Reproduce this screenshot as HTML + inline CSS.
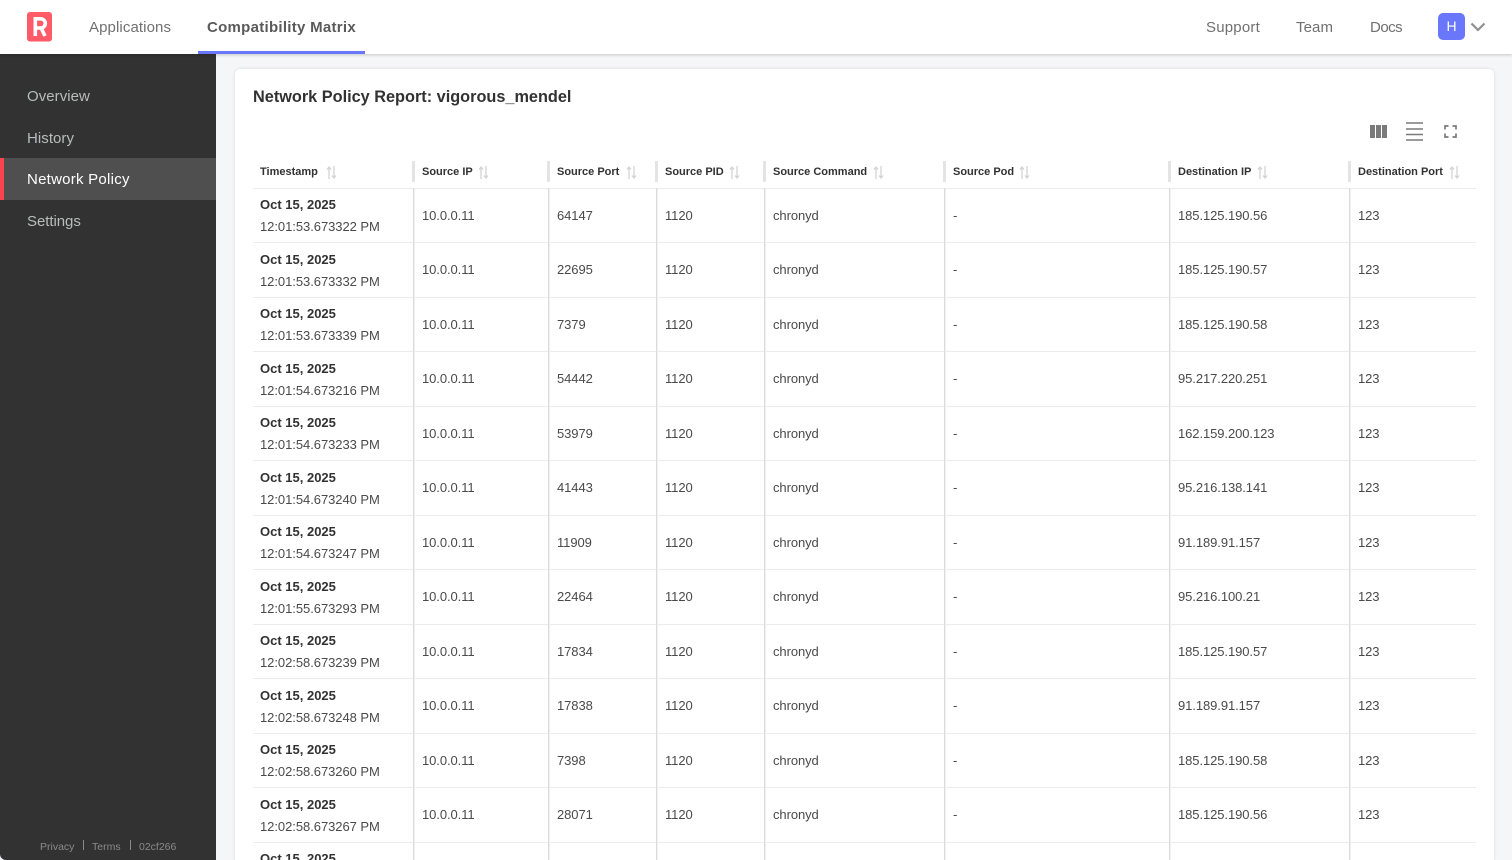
<!DOCTYPE html>
<html lang="en"><head><meta charset="utf-8"><title>Network Policy</title>
<style>
*{box-sizing:border-box}
html,body{margin:0;padding:0;width:1512px;height:860px;overflow:hidden;background:#f5f6f8;font-family:"Liberation Sans",sans-serif;color:#323232}
#wrap{position:relative;width:1512px;height:860px;overflow:hidden}
.a{position:absolute;white-space:nowrap}
#top{position:absolute;left:0;top:0;width:1512px;height:54px;background:#fff;box-shadow:0 1px 3px rgba(0,0,0,.2);z-index:3}
.nav{position:absolute;top:18px;font-size:15px;line-height:20px;color:#707070;white-space:nowrap;letter-spacing:.1px}
#side{position:absolute;left:0;top:54px;width:216px;height:806px;background:#323232;border-bottom-left-radius:6px;z-index:2}
.si{position:absolute;left:27px;font-size:15px;line-height:20px;color:#b8bcbc;letter-spacing:.05px;white-space:nowrap}
.ft{position:absolute;top:786px;font-size:10.5px;line-height:14px;color:#8a8a8a;white-space:nowrap}
#card{position:absolute;left:235px;top:69px;width:1259px;height:791px;background:#fff;border-radius:5px 5px 0 0;box-shadow:0 0 3px rgba(0,0,0,.12);overflow:hidden}
.h{position:absolute;top:96px;font-size:11px;line-height:14px;font-weight:bold;color:#323232;white-space:nowrap}
.s{position:absolute;top:97px;width:11px;height:13px}
.d{position:absolute;top:92px;width:2.500px;height:21px;background:#e4e4e4}
.v{position:absolute;top:119px;height:672px;width:2px;background:#f0f0f0;border-left:1px solid #dcdcdc}
.r{position:absolute;left:18px;width:1223px;height:54.5px;border-top:1px solid #ececec;overflow:hidden}
.r span{position:absolute;top:19px;font-size:13px;line-height:16px;color:#4a4a4a;white-space:nowrap;letter-spacing:-.08px}
.r b{position:absolute;left:7px;top:8.2px;font-size:13px;line-height:16px;color:#323232;white-space:nowrap}
.r i{position:absolute;left:7px;top:30.2px;font-style:normal;font-size:13px;line-height:16px;color:#4a4a4a;white-space:nowrap;letter-spacing:-.05px}
.c2{left:169px}.c3{left:304px}.c4{left:412px}.c5{left:520px}.c6{left:700px}.c7{left:925px}.c8{left:1105px}
</style></head><body><div id="wrap">
<div id="top">
<svg class="a" style="left:27px;top:12px" width="26" height="30" viewBox="0 0 26 30"><rect width="25" height="29.500" rx="3" fill="#ff5a68"/><path d="M8.300 24V6.800h5a4.600 4.600 0 0 1 .8 9.200L18 24M8.300 16h5.500" fill="none" stroke="#fff" stroke-width="3.600"/></svg>
<div class="nav" style="left:89px">Applications</div>
<div class="nav" style="left:207px;font-weight:bold;color:#5a5a5a;letter-spacing:.28px">Compatibility Matrix</div>
<div class="a" style="left:198px;top:51px;width:167px;height:3px;background:#6a77fb"></div>
<div class="nav" style="left:1206px;letter-spacing:.2px">Support</div>
<div class="nav" style="left:1296px">Team</div>
<div class="nav" style="left:1370px;letter-spacing:-.5px">Docs</div>
<div class="a" style="left:1438px;top:13px;width:27px;height:27px;background:#6a77fb;border-radius:5px;color:#fff;font-size:14px;line-height:27px;text-align:center">H</div>
<svg class="a" style="left:1470px;top:22px" width="16" height="10" viewBox="0 0 16 10"><path d="M1.500 1.500L8 8l6.500-6.500" fill="none" stroke="#8f8f8f" stroke-width="2.200"/></svg>
</div>
<div id="side">
<div class="si" style="top:33px">Overview</div>
<div class="si" style="top:75px">History</div>
<div class="a" style="left:0;top:104px;width:216px;height:42px;background:#4f4f4f;border-left:4.500px solid #f7444f"></div>
<div class="si" style="top:116px;color:#fff;letter-spacing:.25px">Network Policy</div>
<div class="si" style="top:158px;letter-spacing:-.05px">Settings</div>
<div class="ft" style="left:40px">Privacy</div>
<div class="a" style="left:83px;top:786px;width:1px;height:10px;background:#8a8a8a"></div>
<div class="ft" style="left:92px">Terms</div>
<div class="a" style="left:130px;top:786px;width:1px;height:10px;background:#8a8a8a"></div>
<div class="ft" style="left:139px">02cf266</div>
</div>
<div id="card">
<div class="a" style="left:18px;top:18px;font-size:16.3px;line-height:20px;font-weight:bold;color:#323232">Network Policy Report: vigorous_mendel</div>
<svg class="a" style="left:1135px;top:56px" width="17" height="13" viewBox="0 0 17 13"><path d="M0 0h5v13H0zM6 0h5v13H6zM12 0h5v13h-5z" fill="#7a7a7a"/></svg>
<svg class="a" style="left:1171px;top:53px" width="17" height="19" viewBox="0 0 17 19"><path d="M0 1h17M0 7h17M0 12.500h17M0 18h17" stroke="#7a7a7a" stroke-width="1.600" fill="none"/></svg>
<svg class="a" style="left:1209px;top:56px" width="13" height="13" viewBox="0 0 13 13"><path d="M1 4.500V1h3.500M8.500 1H12v3.500M12 8.500V12H8.500M4.500 12H1V8.500" stroke="#7a7a7a" stroke-width="1.700" fill="none"/></svg>

<div class="h" style="left:25px">Timestamp</div>
<div class="h" style="left:187px">Source IP</div>
<div class="h" style="left:322px">Source Port</div>
<div class="h" style="left:430px">Source PID</div>
<div class="h" style="left:538px">Source Command</div>
<div class="h" style="left:718px">Source Pod</div>
<div class="h" style="left:943px">Destination IP</div>
<div class="h" style="left:1123px">Destination Port</div>

<svg class="s" style="left:91px" viewBox="0 0 11 13"><path d="M3 13V1M1 3.500L3 1l2 2.500M8 0v12M6 9.500L8 12l2-2.500" stroke="#d4d4d4" stroke-width="1.300" fill="none"/></svg>
<svg class="s" style="left:243px" viewBox="0 0 11 13"><path d="M3 13V1M1 3.500L3 1l2 2.500M8 0v12M6 9.500L8 12l2-2.500" stroke="#d4d4d4" stroke-width="1.300" fill="none"/></svg>
<svg class="s" style="left:391px" viewBox="0 0 11 13"><path d="M3 13V1M1 3.500L3 1l2 2.500M8 0v12M6 9.500L8 12l2-2.500" stroke="#d4d4d4" stroke-width="1.300" fill="none"/></svg>
<svg class="s" style="left:494px" viewBox="0 0 11 13"><path d="M3 13V1M1 3.500L3 1l2 2.500M8 0v12M6 9.500L8 12l2-2.500" stroke="#d4d4d4" stroke-width="1.300" fill="none"/></svg>
<svg class="s" style="left:638px" viewBox="0 0 11 13"><path d="M3 13V1M1 3.500L3 1l2 2.500M8 0v12M6 9.500L8 12l2-2.500" stroke="#d4d4d4" stroke-width="1.300" fill="none"/></svg>
<svg class="s" style="left:784px" viewBox="0 0 11 13"><path d="M3 13V1M1 3.500L3 1l2 2.500M8 0v12M6 9.500L8 12l2-2.500" stroke="#d4d4d4" stroke-width="1.300" fill="none"/></svg>
<svg class="s" style="left:1022px" viewBox="0 0 11 13"><path d="M3 13V1M1 3.500L3 1l2 2.500M8 0v12M6 9.500L8 12l2-2.500" stroke="#d4d4d4" stroke-width="1.300" fill="none"/></svg>
<svg class="s" style="left:1214px" viewBox="0 0 11 13"><path d="M3 13V1M1 3.500L3 1l2 2.500M8 0v12M6 9.500L8 12l2-2.500" stroke="#d4d4d4" stroke-width="1.300" fill="none"/></svg>

<div class="d" style="left:177px"></div><div class="d" style="left:312px"></div><div class="d" style="left:420px"></div><div class="d" style="left:528px"></div><div class="d" style="left:708px"></div><div class="d" style="left:933px"></div><div class="d" style="left:1113px"></div>

<div class="r" style="top:119px"><b>Oct 15, 2025</b><i>12:01:53.673322 PM</i><span class="c2">10.0.0.11</span><span class="c3">64147</span><span class="c4">1120</span><span class="c5">chronyd</span><span class="c6">-</span><span class="c7">185.125.190.56</span><span class="c8">123</span></div>
<div class="r" style="top:173.4px"><b>Oct 15, 2025</b><i>12:01:53.673332 PM</i><span class="c2">10.0.0.11</span><span class="c3">22695</span><span class="c4">1120</span><span class="c5">chronyd</span><span class="c6">-</span><span class="c7">185.125.190.57</span><span class="c8">123</span></div>
<div class="r" style="top:228px"><b>Oct 15, 2025</b><i>12:01:53.673339 PM</i><span class="c2">10.0.0.11</span><span class="c3">7379</span><span class="c4">1120</span><span class="c5">chronyd</span><span class="c6">-</span><span class="c7">185.125.190.58</span><span class="c8">123</span></div>
<div class="r" style="top:282.4px"><b>Oct 15, 2025</b><i>12:01:54.673216 PM</i><span class="c2">10.0.0.11</span><span class="c3">54442</span><span class="c4">1120</span><span class="c5">chronyd</span><span class="c6">-</span><span class="c7">95.217.220.251</span><span class="c8">123</span></div>
<div class="r" style="top:337px"><b>Oct 15, 2025</b><i>12:01:54.673233 PM</i><span class="c2">10.0.0.11</span><span class="c3">53979</span><span class="c4">1120</span><span class="c5">chronyd</span><span class="c6">-</span><span class="c7">162.159.200.123</span><span class="c8">123</span></div>
<div class="r" style="top:391.4px"><b>Oct 15, 2025</b><i>12:01:54.673240 PM</i><span class="c2">10.0.0.11</span><span class="c3">41443</span><span class="c4">1120</span><span class="c5">chronyd</span><span class="c6">-</span><span class="c7">95.216.138.141</span><span class="c8">123</span></div>
<div class="r" style="top:446px"><b>Oct 15, 2025</b><i>12:01:54.673247 PM</i><span class="c2">10.0.0.11</span><span class="c3">11909</span><span class="c4">1120</span><span class="c5">chronyd</span><span class="c6">-</span><span class="c7">91.189.91.157</span><span class="c8">123</span></div>
<div class="r" style="top:500.4px"><b>Oct 15, 2025</b><i>12:01:55.673293 PM</i><span class="c2">10.0.0.11</span><span class="c3">22464</span><span class="c4">1120</span><span class="c5">chronyd</span><span class="c6">-</span><span class="c7">95.216.100.21</span><span class="c8">123</span></div>
<div class="r" style="top:555px"><b>Oct 15, 2025</b><i>12:02:58.673239 PM</i><span class="c2">10.0.0.11</span><span class="c3">17834</span><span class="c4">1120</span><span class="c5">chronyd</span><span class="c6">-</span><span class="c7">185.125.190.57</span><span class="c8">123</span></div>
<div class="r" style="top:609.4px"><b>Oct 15, 2025</b><i>12:02:58.673248 PM</i><span class="c2">10.0.0.11</span><span class="c3">17838</span><span class="c4">1120</span><span class="c5">chronyd</span><span class="c6">-</span><span class="c7">91.189.91.157</span><span class="c8">123</span></div>
<div class="r" style="top:664px"><b>Oct 15, 2025</b><i>12:02:58.673260 PM</i><span class="c2">10.0.0.11</span><span class="c3">7398</span><span class="c4">1120</span><span class="c5">chronyd</span><span class="c6">-</span><span class="c7">185.125.190.58</span><span class="c8">123</span></div>
<div class="r" style="top:718.4px"><b>Oct 15, 2025</b><i>12:02:58.673267 PM</i><span class="c2">10.0.0.11</span><span class="c3">28071</span><span class="c4">1120</span><span class="c5">chronyd</span><span class="c6">-</span><span class="c7">185.125.190.56</span><span class="c8">123</span></div>
<div class="r" style="top:773px;height:18px"><b>Oct 15, 2025</b></div>

<div class="v" style="left:178px"></div><div class="v" style="left:313px"></div><div class="v" style="left:421px"></div><div class="v" style="left:529px"></div><div class="v" style="left:709px"></div><div class="v" style="left:934px"></div><div class="v" style="left:1114px"></div>
</div>
</div></body></html>
